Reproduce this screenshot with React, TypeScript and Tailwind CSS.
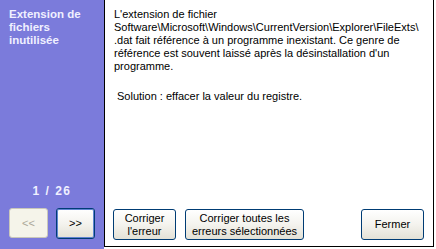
export default function App() {
  const btn =
    "h-[31px] rounded-[3px] border border-[#003c74] bg-gradient-to-b from-[#ffffff] via-[#f4f3ee] to-[#e3e1d6] text-black text-[11px] leading-[13px] flex items-center justify-center text-center";
  return (
    <div className="w-[436px] h-[249px] flex bg-white overflow-hidden font-['Liberation_Sans',Arial,sans-serif]">
      <div className="w-[104px] h-full bg-[#7b7bdb] flex flex-col pt-[8px] pb-[10px]">
        <div className="px-[9px] text-[11.5px] leading-[13px] font-bold text-[#f0f0ff]">
          <div>Extension de</div>
          <div>fichiers</div>
          <div>inutilisée</div>
        </div>
        <div className="flex-1" />
        <div className="text-center text-[12px] leading-[13px] font-bold text-[#f0f0ff] tracking-[1.5px] mb-[10px]">
          1 / 26
        </div>
        <div className="flex gap-[8px] px-[9px]">
          <button className="w-[39px] h-[30px] rounded-[3px] border border-[#c9c7ba] bg-[#f5f4ea] text-[#aca899] text-[11px] flex items-center justify-center">
            &lt;&lt;
          </button>
          <button className="w-[39px] h-[31px] rounded-[3px] border border-[#003c74] shadow-[inset_0_0_0_1px_#5e83d0] bg-gradient-to-b from-[#ffffff] via-[#f4f3ee] to-[#e3e1d6] text-black text-[11px] flex items-center justify-center">
            &gt;&gt;
          </button>
        </div>
      </div>
      <div className="w-[330px] h-[247px] border-l border-r border-b border-black bg-white flex flex-col">
        <div className="pl-[9px] pt-[8px] text-[11px] leading-[13px] text-black whitespace-nowrap">
          <div>L'extension de fichier</div>
          <div>Software\Microsoft\Windows\CurrentVersion\Explorer\FileExts\</div>
          <div>.dat fait référence à un programme inexistant. Ce genre de</div>
          <div>référence est souvent laissé après la désinstallation d'un</div>
          <div>programme.</div>
          <div className="mt-[17px] pl-[3px]">Solution : effacer la valeur du registre.</div>
        </div>
        <div className="flex-1" />
        <div className="flex pl-[8px] pr-[9px] pb-[6px] gap-[9px]">
          <button className={`${btn} w-[63px]`}>
            Corriger
            <br />
            l'erreur
          </button>
          <button className={`${btn} w-[119px]`}>
            Corriger toutes les
            <br />
            erreurs sélectionnées
          </button>
          <button className={`${btn} w-[63px] ml-auto`}>Fermer</button>
        </div>
      </div>
    </div>
  );
}
